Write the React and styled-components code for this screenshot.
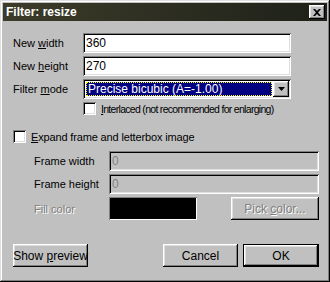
import React from "react";
import styled, { createGlobalStyle, css } from "styled-components";

const Global = createGlobalStyle`
  html, body { margin: 0; padding: 0; background: #c0c0c0; }
  body { font-family: "Liberation Sans", Arial, sans-serif; font-size: 11px; color: #000; }
  * { box-sizing: border-box; }
`;

const raised = css`
  box-shadow: inset -1px -1px #000, inset 1px 1px #fff, inset -2px -2px #808080, inset 2px 2px #dfdfdf;
`;
const sunken = css`
  box-shadow: inset 1px 1px #808080, inset -1px -1px #fff, inset 2px 2px #000, inset -2px -2px #dfdfdf;
`;

const Window = styled.div`
  width: 330px;
  height: 282px;
  background: #c0c0c0;
  padding: 3px;
  display: flex;
  flex-direction: column;
  box-shadow: inset -1px -1px #000, inset 1px 1px #dfdfdf, inset -2px -2px #808080, inset 2px 2px #fff;
`;

const TitleBar = styled.div`
  height: 18px;
  background: linear-gradient(to right, #3d3c2a, #1e2119);
  display: flex;
  align-items: center;
  justify-content: space-between;
  padding: 0 2px 0 3px;
`;

const Title = styled.span`
  color: #fff;
  font-weight: bold;
  font-size: 12px;
`;

const CloseBtn = styled.div`
  width: 16px;
  height: 14px;
  background: #c0c0c0;
  ${raised};
  display: flex;
  align-items: center;
  justify-content: center;
`;

const Content = styled.div`
  padding: 12px 8px 0 10px;
  display: flex;
  flex-direction: column;
`;

const TopGrid = styled.div`
  display: grid;
  grid-template-columns: 70px 208px;
  grid-auto-rows: 20px;
  row-gap: 3px;
  align-items: center;
`;

const Label = styled.span`
  white-space: nowrap;
  ${(p) =>
    p.$disabled &&
    css`
      color: #808080;
      text-shadow: 1px 1px #fff;
    `}
`;

const Field = styled.div`
  height: ${(p) => p.$h || 20}px;
  background: ${(p) => (p.$disabled ? "#c0c0c0" : "#fff")};
  color: ${(p) => (p.$disabled ? "#808080" : "#000")};
  ${sunken};
  padding: 0 3px;
  display: flex;
  align-items: center;
  font-size: 12px;
`;

const Select = styled.div`
  height: 20px;
  background: #fff;
  ${sunken};
  padding: 2px;
  display: flex;
  align-items: stretch;
`;

const SelectValue = styled.div`
  flex: 1;
  margin: 1px;
  background: #000080;
  color: #fff;
  outline: 1px dotted #ffff00;
  outline-offset: -1px;
  padding-left: 2px;
  display: flex;
  align-items: center;
  font-size: 12px;
`;

const DropBtn = styled.div`
  width: 16px;
  background: #c0c0c0;
  ${raised};
  display: flex;
  align-items: center;
  justify-content: center;
`;

const CheckRow = styled.label`
  display: flex;
  align-items: center;
  gap: 5px;
  margin-left: ${(p) => p.$indent || 0}px;
  margin-top: ${(p) => p.$mt || 0}px;
  height: 13px;
  white-space: nowrap;
`;

const CheckText = styled.span`
  font-size: ${(p) => (p.$tight ? "10.5px" : "11px")};
  letter-spacing: ${(p) => (p.$tight ? "-0.7px" : "-0.15px")};
`;

const Box = styled.span`
  width: 13px;
  height: 13px;
  background: #fff;
  ${sunken};
  flex: none;
`;

const FrameGrid = styled.div`
  margin-top: 8px;
  margin-left: 21px;
  display: grid;
  grid-template-columns: 75px 1fr;
  row-gap: 3px;
  align-items: center;
`;

const ColorRow = styled.div`
  display: flex;
  align-items: center;
  justify-content: space-between;
`;

const Swatch = styled.div`
  width: 88px;
  height: 23px;
  background: #000;
  box-shadow: inset 1px 1px #808080, inset -1px -1px #fff;
`;

const Button = styled.div`
  width: ${(p) => p.$w || 75}px;
  height: 23px;
  background: #c0c0c0;
  display: flex;
  align-items: center;
  justify-content: center;
  white-space: nowrap;
  font-size: 12px;
  ${(p) =>
    p.$default
      ? css`
          box-shadow: inset 0 0 0 1px #000, inset -2px -2px #000, inset 2px 2px #fff, inset -3px -3px #808080, inset 3px 3px #dfdfdf;
        `
      : raised};
  ${(p) =>
    p.$disabled &&
    css`
      color: #808080;
      text-shadow: 1px 1px #fff;
    `}
`;

const Footer = styled.div`
  margin-top: 24px;
  display: flex;
  align-items: center;
`;

const Spacer = styled.div`
  flex: 1;
`;

const ButtonGroup = styled.div`
  display: flex;
  gap: 5px;
`;

export default function App() {
  return (
    <>
      <Global />
      <Window>
        <TitleBar>
          <Title>Filter: resize</Title>
          <CloseBtn>
            <svg width="8" height="7" viewBox="0 0 8 7">
              <path d="M0 0h2l2 2 2-2h2L5 3.5 8 7H6L4 5 2 7H0l3-3.5z" fill="#000" />
            </svg>
          </CloseBtn>
        </TitleBar>
        <Content>
          <TopGrid>
            <Label>
              New <u>w</u>idth
            </Label>
            <Field>360</Field>
            <Label>
              New <u>h</u>eight
            </Label>
            <Field>270</Field>
            <Label>
              Filter <u>m</u>ode
            </Label>
            <Select>
              <SelectValue>Precise bicubic (A=-1.00)</SelectValue>
              <DropBtn>
                <svg width="7" height="4" viewBox="0 0 7 4">
                  <path d="M0 0h7L3.5 4z" fill="#000" />
                </svg>
              </DropBtn>
            </Select>
          </TopGrid>
          <CheckRow $indent={70} $mt={3}>
            <Box />
            <CheckText $tight>
              <u>I</u>nterlaced (not recommended for enlarging)
            </CheckText>
          </CheckRow>
          <CheckRow $mt={15}>
            <Box />
            <CheckText>
              <u>E</u>xpand frame and letterbox image
            </CheckText>
          </CheckRow>
          <FrameGrid>
            <Label>Frame width</Label>
            <Field $disabled>0</Field>
            <Label>Frame height</Label>
            <Field $disabled>0</Field>
            <Label $disabled>Fill color</Label>
            <ColorRow>
              <Swatch />
              <Button $w={88} $disabled>
                <span>
                  Pick <u>c</u>olor...
                </span>
              </Button>
            </ColorRow>
          </FrameGrid>
          <Footer>
            <Button>
              <span>
                Show <u>p</u>review
              </span>
            </Button>
            <Spacer />
            <ButtonGroup>
              <Button>Cancel</Button>
              <Button $w={76} $default>
                OK
              </Button>
            </ButtonGroup>
          </Footer>
        </Content>
      </Window>
    </>
  );
}
